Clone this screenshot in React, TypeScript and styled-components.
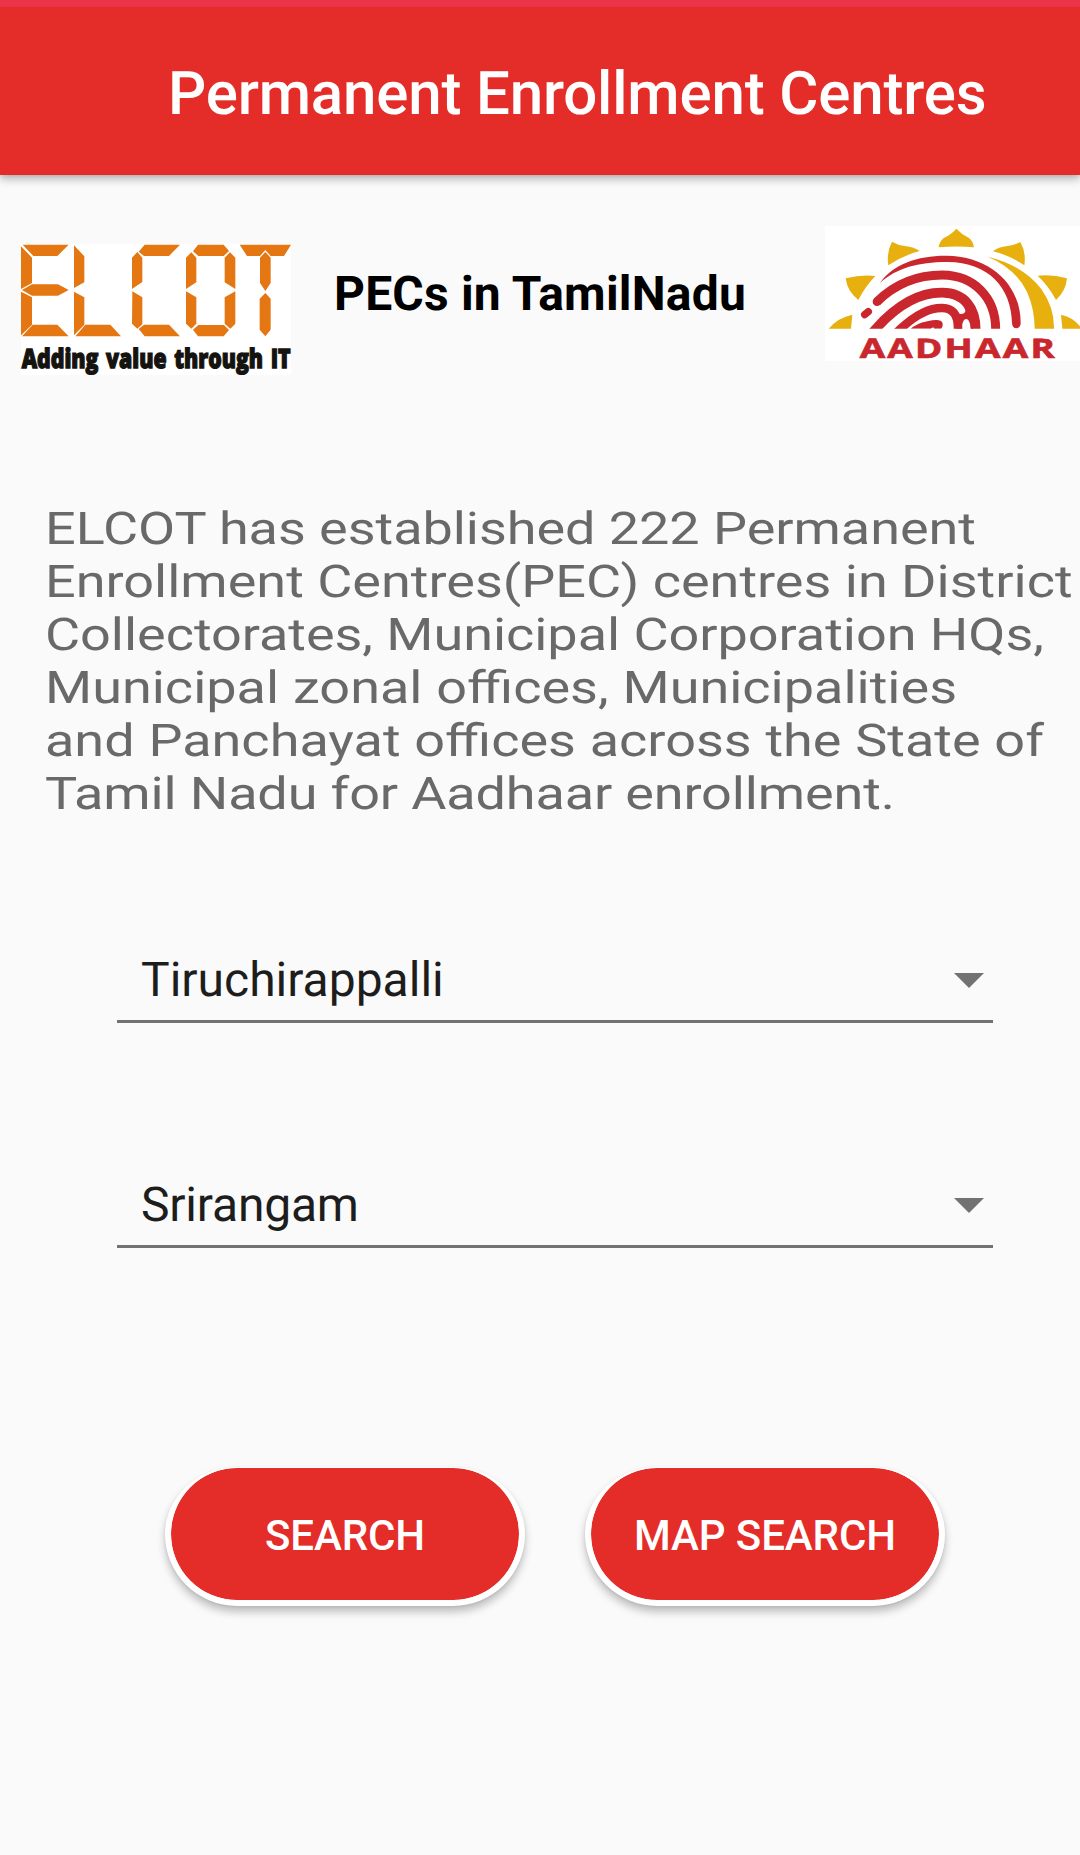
import React from "react";
import styled, { createGlobalStyle } from "styled-components";

const GlobalStyle = createGlobalStyle`
  html, body { margin: 0; background: #fafafa; }
  * { box-sizing: border-box; }
`;

const Page = styled.main`
  display: flex;
  flex-direction: column;
  width: 1080px;
  height: 1855px;
  overflow: hidden;
  background: #fafafa;
  font-family: Roboto, "Liberation Sans", sans-serif;
  text-rendering: geometricPrecision;
`;

const AppBar = styled.header`
  flex: none;
  height: 175px;
  padding: 42px 0 0 168px;
  border-top: 7px solid #eb334a;
  background: #e42d28;
  box-shadow: 0 4px 9px rgba(0, 0, 0, 0.28), 0 0 4px rgba(0, 0, 0, 0.12);
`;

const Title = styled.h1`
  margin: 0;
  color: #fff;
  font-size: 60px;
  font-weight: 500;
  letter-spacing: -0.17px;
  line-height: 90px;
  white-space: nowrap;
`;

const BrandRow = styled.section`
  flex: none;
  display: flex;
  align-items: flex-start;
  height: 321px;
  padding: 51px 0 0 21px;
`;

const ElcotMark = styled.svg`
  flex: none;
  width: 270px;
  height: 131px;
  margin-top: 18px;
  background: #fff;
  overflow: visible;
`;

const Region = styled.h2`
  flex: 1;
  margin: 38px 0 0 43px;
  color: #000;
  font-size: 48px;
  font-weight: 700;
  letter-spacing: 0.2px;
  line-height: 60px;
  white-space: nowrap;
`;

const AadhaarMark = styled.svg`
  flex: none;
  width: 255px;
  height: 135px;
  background: #fff;
  overflow: visible;
`;

const Intro = styled.p`
  flex: none;
  width: 860px;
  height: 318px;
  margin: 6px 0 0 45px;
  color: #696969;
  font-size: 45px;
  line-height: 53px;
  white-space: nowrap;
  transform: scaleX(1.2);
  transform-origin: left top;
`;

const IntroLine = styled.span<{ $track?: string; $words?: string }>`
  display: block;
  letter-spacing: ${({ $track }) => $track ?? "normal"};
  word-spacing: ${({ $words }) => $words ?? "normal"};
`;

const Form = styled.section`
  display: flex;
  flex-direction: column;
  gap: 119px;
  padding: 97px 87px 0 117px;
`;

const Spinner = styled.div`
  display: flex;
  align-items: center;
  justify-content: space-between;
  height: 106px;
  padding: 22px 9px 0 24px;
  border-bottom: 3px solid #727272;
  color: #1d1d1d;
  font-size: 48px;
  line-height: 60px;
`;

const SpinnerValue = styled.span<{ $track?: string }>`
  letter-spacing: ${({ $track }) => $track ?? "normal"};
`;

const Caret = styled.i`
  width: 0;
  height: 0;
  margin-top: 1px;
  border: solid transparent;
  border-width: 15px 15px 0;
  border-top-color: #727272;
`;

const Actions = styled.div`
  display: flex;
  gap: 60px;
  padding: 219px 0 0 165px;
`;

const ActionButton = styled.button`
  width: 360px;
  height: 139px;
  padding: 3px 0 0;
  border: solid #fff;
  border-width: 1px 6px 6px;
  border-radius: 72px / 67px 67px 72px 72px;
  background: #e42d28;
  background-clip: padding-box;
  color: #fff;
  font: 500 42px/56px Roboto, "Liberation Sans", sans-serif;
  letter-spacing: -0.1px;
  box-shadow: 0 6px 9px rgba(0, 0, 0, 0.24), 0 1px 3px rgba(0, 0, 0, 0.08);
`;

function ElcotLogo() {
  return (
    <ElcotMark viewBox="63 43 810 393" role="img" aria-label="ELCOT">
      <g fill="#e57712">
        <path d="M68 45H206L172 79H100ZM63 50L96 84V160L63 178ZM66 181L96 164H174L206 181L174 198H96ZM63 186L96 203V285L63 317ZM66 320L98 285H172L206 320Z" />
        <path d="M222 47L253 80V158L222 175ZM222 186L253 203V285L222 317ZM226 320L256 285H331L363 320Z" />
        <path d="M434 45H540L507 79H432L416 66ZM412 67L427 84V157L396 178V84ZM397 185L427 203V284L412 297L396 282ZM416 298L432 285H507L540 320H434Z" />
        <path d="M594 45H671L687 64L671 79H595L579 65ZM574 68L589 84V158L558 178V84ZM690 68L706 84V178L674 158V84ZM558 185L589 203V282L574 297L558 282ZM706 185V282L691 297L674 282V203ZM579 300L595 286H672L687 301L671 320H594Z" />
        <path d="M719 45H873L852 79H812L796 61L780 79H741ZM796 67L812 84V160L796 184L780 160V84ZM796 190L812 207V300L796 320L779 300V207Z" />
      </g>
      <text x="65" y="416" textLength="807" lengthAdjust="spacingAndGlyphs" wordSpacing="8" fill="#15130f" stroke="#15130f" strokeWidth="4" fontFamily='"Open Sans", sans-serif' fontWeight="800" fontSize="80">
        Adding value through IT
      </text>
    </ElcotMark>
  );
}

function AadhaarLogo() {
  return (
    <AadhaarMark viewBox="45 33 765 405" role="img" aria-label="AADHAAR">
      <clipPath id="horizon">
        <rect x="45" y="33" width="765" height="308" />
      </clipPath>
      <g fill="#e8b00f">
        <path d="M56 341Q85 307 127 299L123 341Z" />
        <path d="M107 190Q155 178 196 183Q165 215 145 255Q112 230 107 190Z" />
        <path d="M246 80Q264 91 285 93Q313 96 329 108Q282 120 235 151Q229 112 246 80Z" />
        <path d="M439 41Q457 60 477 69Q489 78 492 97Q439 92 386 97Q388 80 401 69Q422 60 439 41Z" />
        <path d="M631 81Q649 112 643 151Q600 121 549 109Q565 96 592 93Q613 91 631 81Z" />
        <path d="M683 182Q726 177 771 190Q767 230 738 255Q716 213 683 182Z" />
        <path d="M753 299Q790 307 810 334V341H757Z" />
        <path d="M533 125Q640 151 694 222Q733 277 732 341H674Q674 283 651 230Q615 159 533 125Z" />
      </g>
      <g fill="none" stroke="#c9272d" clipPath="url(#horizon)">
        <path d="M210 204C248 147 326 121 410 122C535 123 632 204 632 324C632 345 606 345 606 324C604 219 536 140 410 141C325 142 260 158 210 204Z" fill="#c9272d" stroke="none" />
        <path d="M201 260C253 209 322 180 397 180C492 181 557 247 557 343" strokeWidth="27" />
        <path d="M201 260L202 259" strokeWidth="26" strokeLinecap="round" />
        <path d="M164 299L175 290" strokeWidth="22" strokeLinecap="round" />
        <path d="M180 361L198 341C255 277 323 232 397 233C466 234 497 280 497 343" strokeWidth="29" />
        <path d="M251 361L272 341C313 303 356 278 397 279C429 280 445 300 444 343" strokeWidth="26" />
        <path d="M302 341C322 325 347 317 378 315C398 314 403 327 394 341H373L370 337L362 341Z" fill="#c9272d" stroke="none" />
        <path d="M430 247Q465 254 487 287L489 341H482C480 302 457 303 455 341H439L435 298L452 297Q467 297 466 286Q460 266 430 253Z" fill="#c9272d" stroke="none" />
      </g>
      <text x="149" y="428" textLength="592" lengthAdjust="spacingAndGlyphs" letterSpacing="5" fill="#c9272d" stroke="#c9272d" strokeWidth="2" fontFamily='"Open Sans", sans-serif' fontWeight="700" fontSize="81">
        AADHAAR
      </text>
    </AadhaarMark>
  );
}

const introLines = [
  { text: "ELCOT has established 222 Permanent", track: "-0.04px" },
  { text: "Enrollment Centres(PEC) centres in District" },
  { text: "Collectorates, Municipal Corporation HQs,", track: "-0.03px" },
  { text: "Municipal zonal offices, Municipalities", words: "0.4px" },
  { text: "and Panchayat offices across the State of", words: "0.3px" },
  { text: "Tamil Nadu for Aadhaar enrollment.", track: "-0.12px" },
];

const places = [
  { name: "Tiruchirappalli" },
  { name: "Srirangam", track: "-0.2px" },
];

export default function App() {
  return (
    <>
      <GlobalStyle />
      <Page>
        <AppBar>
          <Title>Permanent Enrollment Centres</Title>
        </AppBar>
        <BrandRow>
          <ElcotLogo />
          <Region>PECs in TamilNadu</Region>
          <AadhaarLogo />
        </BrandRow>
        <Intro>
          {introLines.map((line) => (
            <IntroLine key={line.text} $track={line.track} $words={line.words}>
              {line.text}
            </IntroLine>
          ))}
        </Intro>
        <Form>
          {places.map((place) => (
            <Spinner key={place.name}>
              <SpinnerValue $track={place.track}>{place.name}</SpinnerValue>
              <Caret />
            </Spinner>
          ))}
        </Form>
        <Actions>
          <ActionButton>SEARCH</ActionButton>
          <ActionButton>MAP SEARCH</ActionButton>
        </Actions>
      </Page>
    </>
  );
}
